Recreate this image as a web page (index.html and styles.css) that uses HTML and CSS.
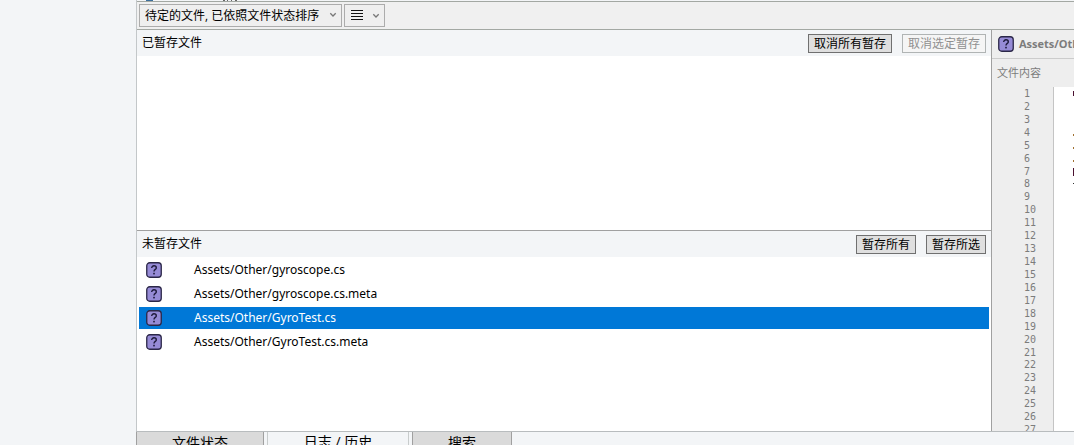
FILE: index.html
```html
<!DOCTYPE html>
<html lang="zh-CN">
<head>
    <meta charset="UTF-8">
    <meta name="viewport" content="width=device-width, initial-scale=1.0">
    <title>文件状态</title>
    <link rel="stylesheet" href="styles.css">
</head>
<body>
    <svg class="defs" aria-hidden="true">
        <symbol id="unknown" viewBox="0 0 16 16">
            <rect x="0.75" y="0.75" width="14.5" height="14.5" rx="3" fill="#968bd6" stroke="#2b2748" stroke-width="1.3"/>
            <path d="M5.700 6.100C5.700 4.600 6.700 3.800 8 3.800s2.300.8 2.300 2.100C10.300 7.400 8 7.500 8 9.500" fill="none" stroke="#1e1a3c" stroke-width="1.400"/>
            <rect x="7.200" y="10.800" width="1.600" height="1.600" fill="#1e1a3c"/>
        </symbol>
        <symbol id="chevron" viewBox="0 0 8 6">
            <path d="M1.300 1.300L4 4l2.700-2.700" fill="none" stroke="#777" stroke-width="1.300"/>
        </symbol>
    </svg>

    <div class="app">
        <aside class="sidebar"></aside>
        <div class="work">
            <div class="graph-edge">
                <svg width="110" height="1" aria-hidden="true">
                    <rect x="9" width="7" height="1" fill="#3c6f9c"/>
                    <path d="M86 0h2v1h-2zM90 0h1v1h-1zM94 0h1v1h-1zM98 0h2v1h-2z" fill="#666"/>
                </svg>
            </div>

            <div class="toolbar">
                <div class="picker">
                    <select class="sort" aria-label="排序">
                        <option>待定的文件, 已依照文件状态排序</option>
                    </select>
                    <svg class="chevron"><use href="#chevron"/></svg>
                </div>
                <button class="view" aria-label="视图">
                    <svg width="12" height="11" viewBox="0 0 12 11">
                        <path d="M0 .5h12M0 3.500h12M0 6.500h12M0 9.500h12" stroke="#111"/>
                    </svg>
                    <svg width="8" height="6"><use href="#chevron"/></svg>
                </button>
            </div>

            <div class="panes">
                <div class="files">
                    <section class="staged">
                        <header class="pane-head">
                            <h2>已暂存文件</h2>
                            <button class="btn">取消所有暂存</button>
                            <button class="btn" disabled>取消选定暂存</button>
                        </header>
                    </section>
                    <section class="unstaged">
                        <header class="pane-head">
                            <h2>未暂存文件</h2>
                            <button class="btn">暂存所有</button>
                            <button class="btn">暂存所选</button>
                        </header>
                        <ul class="list">
                            <li><svg class="icon"><use href="#unknown"/></svg>Assets/Other/gyroscope.cs</li>
                            <li><svg class="icon"><use href="#unknown"/></svg>Assets/Other/gyroscope.cs.meta</li>
                            <li class="selected"><svg class="icon"><use href="#unknown"/></svg>Assets/Other/GyroTest.cs</li>
                            <li><svg class="icon"><use href="#unknown"/></svg>Assets/Other/GyroTest.cs.meta</li>
                        </ul>
                    </section>
                </div>

                <section class="diff">
                    <header class="diff-head">
                        <svg class="icon"><use href="#unknown"/></svg>
                        <h2>Assets/Other/GyroTest.cs</h2>
                    </header>
                    <p class="diff-label">文件内容</p>
                    <div class="source">
                        <ol class="lines">
                            <li>1</li><li>2</li><li>3</li><li>4</li><li>5</li><li>6</li><li>7</li><li>8</li><li>9</li>
                            <li>10</li><li>11</li><li>12</li><li>13</li><li>14</li><li>15</li><li>16</li><li>17</li><li>18</li>
                            <li>19</li><li>20</li><li>21</li><li>22</li><li>23</li><li>24</li><li>25</li><li>26</li><li>27</li>
                        </ol>
                        <div class="code">
                            <svg width="2" height="100" aria-hidden="true">
                                <path d="M0 4h2v5H0zM0 81h2v8H0z" fill="#4a1030"/>
                                <path d="M0 47h2v2H0zM0 60h2v2H0zM0 73h2v2H0z" fill="#a07030"/>
                                <path d="M0 96h2v1H0z" fill="#333"/>
                            </svg>
                        </div>
                    </div>
                </section>
            </div>

            <nav class="tabs">
                <button class="tab status">文件状态</button>
                <button class="tab log active">日志 / 历史</button>
                <button class="tab search">搜索</button>
            </nav>
        </div>
    </div>
</body>
</html>
```
FILE: styles.css
```css
* {
    margin: 0;
    padding: 0;
    box-sizing: border-box;
}

body {
    font-family: "Open Sans", "Noto Sans CJK SC", sans-serif;
    font-size: 12px;
    line-height: 16px;
    color: #000;
    background: #f3f5f7;
    overflow: hidden;
}

button,
select {
    font: inherit;
    color: inherit;
    appearance: none;
    border-radius: 0;
}

svg {
    display: block;
    flex: none;
}

h2 {
    font-size: 12px;
    font-weight: 400;
    white-space: nowrap;
}

ul,
ol {
    list-style: none;
}

.defs {
    display: none;
}

.app {
    display: flex;
    height: 100vh;
}

.sidebar {
    flex: none;
    width: 136px;
}

.work {
    flex: 1;
    min-width: 0;
    display: flex;
    flex-direction: column;
    border-left: 1px solid #c3c7c9;
}

.graph-edge {
    flex: none;
    height: 2px;
    border-bottom: 1px solid #a3a8a3;
}

/* toolbar */
.toolbar {
    flex: none;
    display: flex;
    gap: 2px;
    height: 28px;
    padding: 2px;
    background: #f0f0f0;
    border-bottom: 1px solid #a3a8a3;
}

.picker {
    position: relative;
}

.sort,
.view {
    height: 23px;
    background: #efefef;
    border: 1px solid #acacac;
}

.sort {
    width: 203px;
    padding: 0 20px 0 5px;
}

.chevron {
    position: absolute;
    right: 5px;
    top: 8px;
    width: 8px;
    height: 6px;
    pointer-events: none;
}

.view {
    display: flex;
    align-items: center;
    gap: 9px;
    width: 41px;
    padding: 0 6px;
}

/* file lists */
.panes {
    flex: 1;
    min-height: 0;
    display: flex;
}

.files {
    flex: 1;
    min-width: 0;
    display: flex;
    flex-direction: column;
    background: #fff;
}

.staged,
.unstaged {
    flex: 1;
}

.unstaged {
    border-top: 1px solid #a0a0a0;
}

.pane-head {
    display: flex;
    align-items: center;
    gap: 10px;
    height: 26px;
    padding: 0 5px;
    background: #f3f5f7;
}

.pane-head h2 {
    flex: 1;
}

.btn {
    height: 19px;
    padding: 0 5px;
    line-height: 17px;
    background: #dfdfdf;
    border: 1px solid #707070;
}

.btn:disabled {
    color: #909090;
    background: #f5f5f5;
    border-color: #b0b4b4;
}

.list {
    padding: 2px;
    font-family: "Noto Sans", "Noto Sans CJK SC", sans-serif;
    line-height: 18px;
}

.list li {
    display: flex;
    align-items: center;
    gap: 32px;
    height: 22px;
    margin-bottom: 2px;
    padding-left: 7px;
}

.list .selected {
    color: #fff;
    background: #0078d7;
}

.icon {
    width: 16px;
    height: 16px;
}

/* file content */
.diff {
    flex: none;
    width: 83px;
    display: flex;
    flex-direction: column;
    overflow: hidden;
    color: #7c7c7c;
    background: #eee;
    border-left: 1px solid #a0a0a0;
}

.diff-head {
    flex: none;
    display: flex;
    align-items: center;
    gap: 5px;
    height: 29px;
    padding-left: 6px;
    border-bottom: 1px solid #ccc;
}

.diff-head h2 {
    font-size: 11px;
    font-weight: 700;
}

.diff-label {
    flex: none;
    height: 28px;
    padding: 6px 5px;
    font-size: 11px;
}

.source {
    flex: 1;
    min-height: 0;
    display: flex;
    overflow: hidden;
}

/* rows share the height, the last one is cut by the tabs */
.lines {
    flex: none;
    display: grid;
    grid-auto-rows: 1fr;
    width: 61px;
    margin-bottom: -6px;
    padding: 1px 0 0 32px;
    font-family: "DejaVu Sans Mono", monospace;
    font-size: 10px;
    line-height: 12px;
}

.code {
    flex: 1;
    padding-left: 19px;
    background: #fff;
    border-left: 1px solid #c4c4c4;
}

/* bottom tabs */
.tabs {
    flex: none;
    display: flex;
    gap: 3px;
    height: 14px;
    margin-left: -1px;
    overflow: hidden;
    border-top: 1px solid #b8bcbe;
}

.tab {
    height: 26px;
    font-size: 14px;
    line-height: 18px;
    padding-bottom: 4px;
    background: #dadada;
    border: 1px solid #a0a0a0;
    border-top: 0;
}

.tab.active {
    padding-bottom: 6px;
    background: #f3f5f7;
    border-color: #c8cccc;
}

.status {
    width: 128px;
}

.log {
    width: 142px;
}

.search {
    width: 100px;
}
```
